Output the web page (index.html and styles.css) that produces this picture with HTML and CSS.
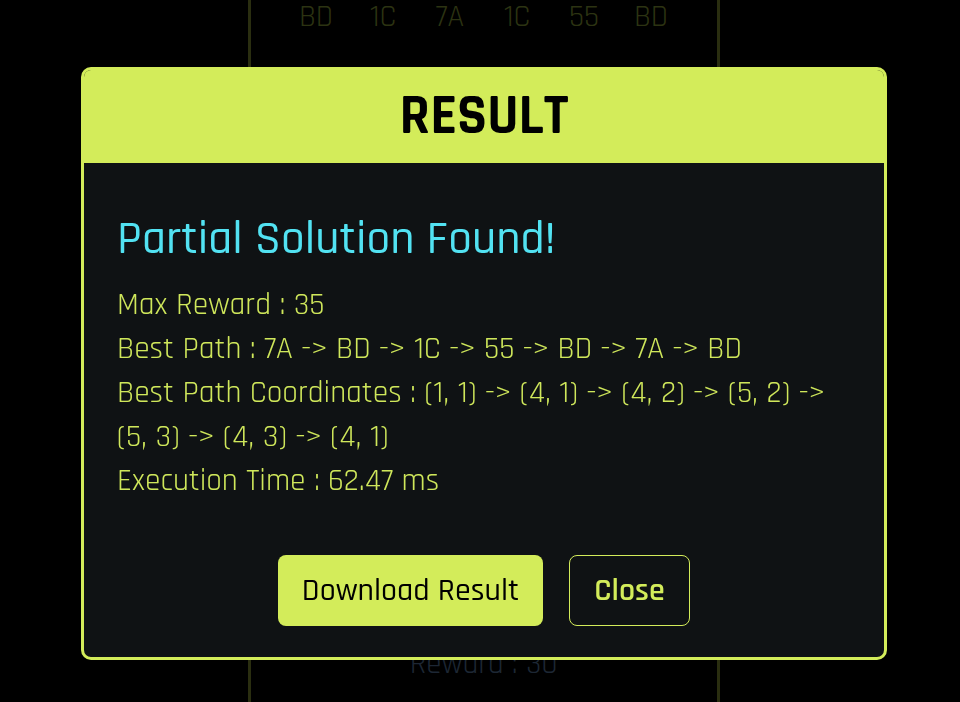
FILE: index.html
```html
<!DOCTYPE html>
<html lang="en">
<head>
<meta charset="utf-8">
<title>Result</title>
<link rel="stylesheet" href="styles.css">
</head>
<body>
<div class="page">
  <div class="board">
    <div class="tokens">
      <span>BD</span><span>1C</span><span>7A</span><span>1C</span><span>55</span><span>BD</span>
    </div>
    <div class="reward">Reward : 30</div>
  </div>
</div>
<div class="modal">
  <div class="modal-head">RESULT</div>
  <div class="modal-body">
    <h2 class="status">Partial Solution Found!</h2>
    <p class="line">Max Reward : 35</p>
    <p class="line">Best Path : 7A -&gt; BD -&gt; 1C -&gt; 55 -&gt; BD -&gt; 7A -&gt; BD</p>
    <p class="line">Best Path Coordinates : (1, 1) -&gt; (4, 1) -&gt; (4, 2) -&gt; (5, 2) -&gt; (5, 3) -&gt; (4, 3) -&gt; (4, 1)</p>
    <p class="line">Execution Time : 62.47 ms</p>
    <div class="actions">
      <button class="btn btn-primary">Download Result</button>
      <button class="btn btn-outline">Close</button>
    </div>
  </div>
</div>
</body>
</html>
```
FILE: styles.css
```css
* { box-sizing: border-box; }
html, body { margin: 0; padding: 0; }
body {
  background: #000;
  width: 960px;
  height: 702px;
  overflow: hidden;
  font-family: "Rajdhani", "Liberation Sans Narrow", "Roboto", sans-serif;
}
.page {
  display: flex;
  justify-content: center;
  height: 702px;
}
.board {
  width: 472px;
  margin-left: 7px;
  height: 702px;
  border-left: 3px solid #2a2e10;
  border-right: 3px solid #2a2e10;
  display: flex;
  flex-direction: column;
  justify-content: space-between;
  align-items: center;
}
.tokens {
  display: grid;
  grid-template-columns: repeat(6, 67px);
  justify-items: center;
  color: #2c3312;
  font-size: 31px;
  line-height: 40px;
  margin-top: -3px;
}
.reward {
  color: #1d2734;
  font-size: 31px;
  line-height: 36px;
  margin-bottom: 20px;
}
.modal {
  position: fixed;
  left: 81px;
  top: 67px;
  width: 806px;
  height: 593px;
  border: 3px solid #d3ec5a;
  border-radius: 10px;
  background: #0f1214;
  overflow: hidden;
  display: flex;
  flex-direction: column;
}
.modal-head {
  background: #d3ec5a;
  height: 93px;
  display: flex;
  align-items: center;
  justify-content: center;
  color: #000;
  font-weight: 700;
  font-size: 56px;
}
.modal-body {
  padding: 50px 33px 0 33px;
  display: flex;
  flex-direction: column;
}
.status {
  margin: 0 0 18px 0;
  color: #52e2f2;
  font-weight: 500;
  font-size: 47.4px;
  line-height: 52px;
}
.line {
  margin: 0;
  color: #cfe75b;
  font-size: 31.4px;
  line-height: 44px;
}
.actions {
  display: flex;
  justify-content: center;
  gap: 26px;
  margin-top: 52px;
}
.btn {
  height: 71px;
  border-radius: 8px;
  font-family: inherit;
  font-size: 32px;
  padding: 0 20px;
  cursor: pointer;
}
.btn-primary {
  width: 265px;
  background: #d3ec5a;
  border: none;
  color: #000;
  font-weight: 500;
}
.btn-outline {
  width: 121px;
  background: transparent;
  border: 1px solid #d3ec5a;
  color: #d3ec5a;
  font-weight: 600;
}
```
